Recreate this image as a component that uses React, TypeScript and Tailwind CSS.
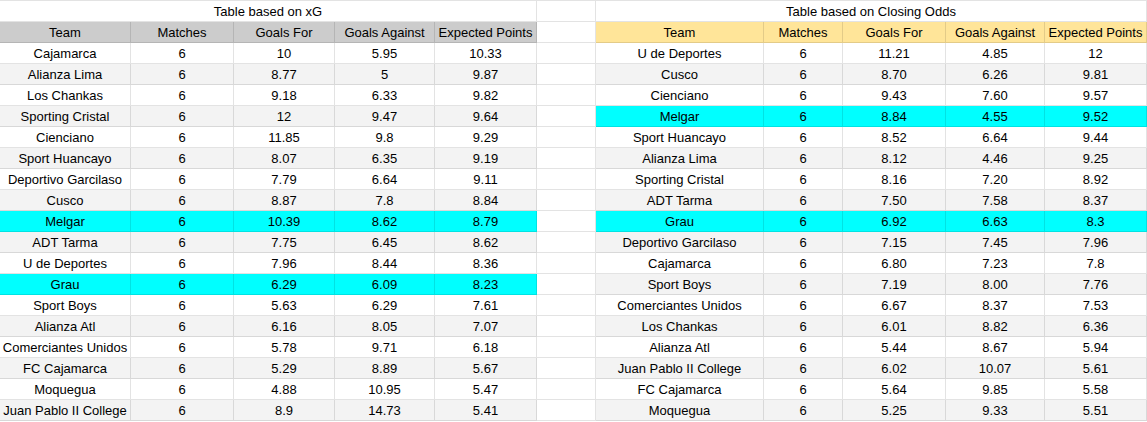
type Row = [string, string, string, string, string, boolean?]

const xgRows: Row[] = [
  ['Cajamarca', '6', '10', '5.95', '10.33'],
  ['Alianza Lima', '6', '8.77', '5', '9.87'],
  ['Los Chankas', '6', '9.18', '6.33', '9.82'],
  ['Sporting Cristal', '6', '12', '9.47', '9.64'],
  ['Cienciano', '6', '11.85', '9.8', '9.29'],
  ['Sport Huancayo', '6', '8.07', '6.35', '9.19'],
  ['Deportivo Garcilaso', '6', '7.79', '6.64', '9.11'],
  ['Cusco', '6', '8.87', '7.8', '8.84'],
  ['Melgar', '6', '10.39', '8.62', '8.79', true],
  ['ADT Tarma', '6', '7.75', '6.45', '8.62'],
  ['U de Deportes', '6', '7.96', '8.44', '8.36'],
  ['Grau', '6', '6.29', '6.09', '8.23', true],
  ['Sport Boys', '6', '5.63', '6.29', '7.61'],
  ['Alianza Atl', '6', '6.16', '8.05', '7.07'],
  ['Comerciantes Unidos', '6', '5.78', '9.71', '6.18'],
  ['FC Cajamarca', '6', '5.29', '8.89', '5.67'],
  ['Moquegua', '6', '4.88', '10.95', '5.47'],
  ['Juan Pablo II College', '6', '8.9', '14.73', '5.41'],
]

const oddsRows: Row[] = [
  ['U de Deportes', '6', '11.21', '4.85', '12'],
  ['Cusco', '6', '8.70', '6.26', '9.81'],
  ['Cienciano', '6', '9.43', '7.60', '9.57'],
  ['Melgar', '6', '8.84', '4.55', '9.52', true],
  ['Sport Huancayo', '6', '8.52', '6.64', '9.44'],
  ['Alianza Lima', '6', '8.12', '4.46', '9.25'],
  ['Sporting Cristal', '6', '8.16', '7.20', '8.92'],
  ['ADT Tarma', '6', '7.50', '7.58', '8.37'],
  ['Grau', '6', '6.92', '6.63', '8.3', true],
  ['Deportivo Garcilaso', '6', '7.15', '7.45', '7.96'],
  ['Cajamarca', '6', '6.80', '7.23', '7.8'],
  ['Sport Boys', '6', '7.19', '8.00', '7.76'],
  ['Comerciantes Unidos', '6', '6.67', '8.37', '7.53'],
  ['Los Chankas', '6', '6.01', '8.82', '6.36'],
  ['Alianza Atl', '6', '5.44', '8.67', '5.94'],
  ['Juan Pablo II College', '6', '6.02', '10.07', '5.61'],
  ['FC Cajamarca', '6', '5.64', '9.85', '5.58'],
  ['Moquegua', '6', '5.25', '9.33', '5.51'],
]

const headers = ['Team', 'Matches', 'Goals For', 'Goals Against', 'Expected Points']

const cell =
  'h-[21px] flex items-center justify-center border-r border-b border-[rgba(0,0,0,0.11)] whitespace-nowrap overflow-hidden pt-px'

function SheetTable({
  title,
  rows,
  cols,
  headerBg,
}: {
  title: string
  rows: Row[]
  cols: string
  headerBg: string
}) {
  return (
    <div className="flex flex-col">
      {/* merged title cell */}
      <div className={cell + ' bg-white'}>{title}</div>

      <div className={'grid ' + cols + ' ' + headerBg}>
        {headers.map((h) => (
          <div key={h} className={cell}>
            {h}
          </div>
        ))}
      </div>

      {rows.map((r, i) => {
        const bg = r[5] ? 'bg-[#00ffff]' : i % 2 === 0 ? 'bg-white' : 'bg-[#f3f3f3]'
        return (
          <div key={r[0]} className={'grid ' + cols + ' ' + bg}>
            {r.slice(0, 5).map((v, j) => (
              <div key={j} className={cell}>
                {v as string}
              </div>
            ))}
          </div>
        )
      })}
    </div>
  )
}

export default function App() {
  return (
    <div
      className="w-[1147px] h-[422px] bg-white overflow-hidden text-[13px] leading-[16px] text-black"
      style={{ fontFamily: '"Liberation Sans", Arial, sans-serif' }}
    >
      <div className="flex border-t border-[rgba(0,0,0,0.11)]">
        <div className="w-[537px] shrink-0">
          <SheetTable
            title="Table based on xG"
            rows={xgRows}
            cols="grid-cols-[131px_103px_101px_100px_102px]"
            headerBg="bg-[#cccccc]"
          />
        </div>

        {/* empty spacer column */}
        <div className="w-[59px] shrink-0 flex flex-col">
          {Array.from({ length: 20 }).map((_, i) => (
            <div key={i} className={cell + ' bg-white'} />
          ))}
        </div>

        <div className="w-[551px] shrink-0">
          <SheetTable
            title="Table based on Closing Odds"
            rows={oddsRows}
            cols="grid-cols-[168px_79px_103px_99px_102px]"
            headerBg="bg-[#ffe599]"
          />
        </div>
      </div>
    </div>
  )
}
